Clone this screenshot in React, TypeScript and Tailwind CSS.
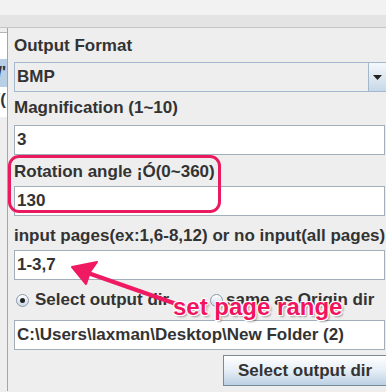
import React from 'react';

const font = "font-['Liberation_Sans',Arial,sans-serif]";

function Label({ children, className = '' }: { children: React.ReactNode; className?: string }) {
    return (
        <div className={`h-[20px] text-[17px] font-bold leading-[20px] text-[#333] whitespace-nowrap ${className}`}>
            {children}
        </div>
    );
}

function Field({ value, className = '' }: { value: string; className?: string }) {
    return (
        <div className={`h-[30px] w-[371px] bg-white border border-[#a2aeba] pl-[2px] text-[17px] font-bold leading-[28px] text-[#333] whitespace-nowrap overflow-hidden ${className}`}>
            {value}
        </div>
    );
}

function Radio({ checked }: { checked?: boolean }) {
    return (
        <span className="w-[13px] h-[13px] rounded-full border border-[#8a99a8] bg-gradient-to-b from-white to-[#c9d8e6] flex items-center justify-center shrink-0">
            {checked && <span className="w-[5px] h-[5px] rounded-full bg-[#222]" />}
        </span>
    );
}

export default function App() {
    return (
        <div className={`relative w-[386px] h-[392px] overflow-hidden bg-[#eeeeee] ${font}`}>
            {/* top bars */}
            <div className="h-[15px] bg-[#f2f2f2]" />
            <div className="h-[13px] bg-[#e4e4e4] border-b border-[#c6c6c6]" />

            <div className="flex">
                {/* cut-off list on the left */}
                <div className="w-[8px] h-[363px] border-r border-[#a5a5a5] shrink-0 pt-[4px]">
                    <div className="h-[27px] bg-white border-t border-[#b5b5b5]" />
                    <div className="h-[28px] bg-[#b8cfe5] flex justify-end overflow-hidden whitespace-nowrap text-[17px] font-bold leading-[28px] text-[#333] pr-[1px]">w/'</div>
                    <div className="h-[30px] bg-white flex justify-end overflow-hidden whitespace-nowrap text-[17px] font-bold leading-[26px] text-[#333] pr-[1px]">w/(</div>
                </div>

                {/* main form */}
                <div className="flex flex-col pl-[6px]">
                    <Label className="mt-[8px]">Output Format</Label>
                    <div className="mt-[6px] h-[30px] w-[378px] flex border border-[#a3b8cc] bg-[#eeeeee]">
                        <div className="flex-1 pl-[2px] text-[17px] font-bold leading-[28px] text-[#333]">BMP</div>
                        <div className="w-[23px] border-l border-[#a3b8cc] bg-gradient-to-b from-[#f4f8fb] to-[#c8d8e8] flex items-center pl-[4px]">
                            <svg width="9" height="5" viewBox="0 0 9 5"><path d="M0 0h9L4.5 5z" fill="#222" /></svg>
                        </div>
                    </div>

                    <Label className="mt-[6px]">Magnification (1~10)</Label>
                    <Field value="3" className="mt-[7px]" />

                    <Label className="mt-[7px]">Rotation angle ¡Ó(0~360)</Label>
                    <Field value="130" className="mt-[4px]" />

                    <Label className="mt-[10px]">input pages(ex:1,6-8,12) or no input(all pages)</Label>
                    <Field value="1-3,7" className="mt-[4px]" />

                    <div className="mt-[10px] h-[20px] flex items-center text-[17px] font-bold text-[#333] whitespace-nowrap">
                        <div className="flex items-center pl-[2px] w-[196px]">
                            <Radio checked />
                            <span className="ml-[6px]">Select output dir</span>
                        </div>
                        <div className="flex items-center">
                            <Radio />
                            <span className="ml-[3px]">same as Origin dir</span>
                        </div>
                    </div>

                    <Field value="C:\Users\laxman\Desktop\New Folder (2)" className="mt-[10px]" />

                    <button className="mt-[5px] ml-[209px] w-[166px] h-[31px] border border-[#7a8a99] bg-gradient-to-b from-white via-[#e6eef6] to-[#bcd0e4] text-[17px] font-bold text-[#333] text-left pl-[14px] whitespace-nowrap">
                        Select output dir
                    </button>
                </div>
            </div>

            {/* annotations */}
            <div className="absolute left-[8px] top-[155px] w-[213px] h-[58px] border-[3px] border-[#ea1a60] rounded-[11px]" />
            <svg className="absolute left-0 top-0" width="386" height="392" viewBox="0 0 386 392">
                <path d="M88 273 L182 306" stroke="#f01a63" strokeWidth="4.5" strokeLinecap="round" />
                <path d="M72 267 L97 262 L90 272 L86 284 Z" fill="#f01a63" stroke="#f01a63" strokeWidth="2" strokeLinejoin="round" />
            </svg>
            <div className="absolute left-[173px] top-[293px] text-[24px] font-bold leading-[28px] text-[#f2145f] whitespace-nowrap [text-shadow:1px_1px_0_#fff,-1px_-1px_0_#fff,1px_-1px_0_#fff,-1px_1px_0_#fff,2px_2px_2px_rgba(0,0,0,0.35)]">
                set page range
            </div>
        </div>
    );
}
